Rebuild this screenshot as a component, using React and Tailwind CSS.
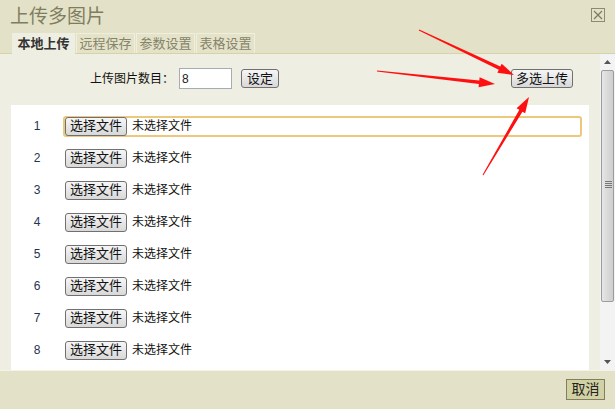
import React from 'react';

const tabs = ['本地上传', '远程保存', '参数设置', '表格设置'];
const rows = [1, 2, 3, 4, 5, 6, 7, 8];

// red arrow made of a tapered shaft and a filled head
const Arrow = ({ x1, y1, x2, y2 }) => {
  const dx = x2 - x1;
  const dy = y2 - y1;
  const len = Math.hypot(dx, dy);
  const ux = dx / len;
  const uy = dy / len;
  const nx = -uy;
  const ny = ux;
  const head = 16;
  const bx = x2 - ux * head;
  const by = y2 - uy * head;
  const pts = [
    [x1 + nx * 0.5, y1 + ny * 0.5],
    [bx + nx * 1.8, by + ny * 1.8],
    [bx + nx * 5, by + ny * 5],
    [x2, y2],
    [bx - nx * 5, by - ny * 5],
    [bx - nx * 1.8, by - ny * 1.8],
    [x1 - nx * 0.5, y1 - ny * 0.5],
  ];
  return <polygon points={pts.map((p) => p.join(',')).join(' ')} fill="#ff1010" />;
};

const GrayButton = ({ children, className = '' }) => (
  <button
    className={`flex h-[19px] items-center justify-center whitespace-nowrap rounded-[3px] border border-[#707070] bg-gradient-to-b from-[#f6f6f6] to-[#d8d8d8] p-0 text-[13px] leading-[16px] text-[#111] ${className}`}
  >
    {children}
  </button>
);

export default function App() {
  return (
    <div
      className="relative flex h-[409px] w-[615px] flex-col overflow-hidden bg-[#e3e2c8] text-[#222]"
      style={{ fontFamily: '"Liberation Sans", "Noto Sans CJK SC", sans-serif' }}
    >
      {/* header */}
      <div className="relative h-[54px] shrink-0 border-b border-[#d6d4a6]">
        <div className="pl-[10px] pt-[4px] text-[19px] leading-[26px] text-[#7f7d60]">上传多图片</div>
        <div className="absolute right-[10px] top-[8px] flex h-[14px] w-[14px] items-center justify-center border border-[#8c8b70]">
          <svg width="10" height="10" viewBox="0 0 10 10">
            <path d="M1 1L9 9M9 1L1 9" stroke="#7c7b60" strokeWidth="1.2" />
          </svg>
        </div>
        <div className="absolute bottom-[-1px] left-[12px] flex gap-[1px]">
          {tabs.map((t, i) => (
            <div
              key={t}
              className={
                i === 0
                  ? 'flex h-[21px] w-[63px] items-center justify-center bg-[#efeee2] text-[13px] font-bold text-[#333]'
                  : 'flex h-[20px] w-[59px] items-center justify-center border border-b-0 border-[#f0efdc] bg-[#e4e3c9] text-[13px] text-[#86846a]'
              }
            >
              {t}
            </div>
          ))}
        </div>
      </div>

      {/* body */}
      <div className="flex min-h-0 flex-1 bg-[#efeee2]">
        <div className="flex flex-1 flex-col pl-[11px] pr-[11px]">
          <div className="flex h-[51px] items-center pb-[2px]">
            <span className="ml-[79px] text-[12px] text-[#111]">上传图片数目：</span>
            <div className="ml-[5px] flex h-[21px] w-[53px] items-center border border-[#a5acb2] bg-white pl-[2px] text-[12px]">8</div>
            <GrayButton className="ml-[9px] w-[38px]">设定</GrayButton>
            <GrayButton className="ml-auto mr-[16px] w-[62px]">多选上传</GrayButton>
          </div>
          <div className="flex-1 bg-white pt-[5px]">
            {rows.map((n) => (
              <div key={n} className="flex h-[32px] items-center">
                <span className="w-[52px] text-center text-[12px] text-[#1f3452]">{n}</span>
                <div
                  className={`flex h-[21px] w-[519px] items-center rounded-[3px] border-2 text-[12px] ${
                    n === 1 ? 'border-[#ecc87c]' : 'border-transparent'
                  }`}
                >
                  <GrayButton className="h-[18px] w-[62px] text-[12px]">选择文件</GrayButton>
                  <span className="ml-[5px] whitespace-nowrap text-[12px] text-[#111]">未选择文件</span>
                </div>
              </div>
            ))}
          </div>
        </div>

        {/* scrollbar */}
        <div className="flex w-[15px] shrink-0 flex-col bg-[#f3f3f3]">
          <div className="flex h-[16px] items-center justify-center">
            <svg width="7" height="4" viewBox="0 0 7 4"><path d="M0 4L3.5 0L7 4Z" fill="#555" /></svg>
          </div>
          <div className="relative mx-[1px] h-[232px] rounded-[2px] border border-[#9c9c9c] bg-gradient-to-r from-[#e6e6e6] via-[#dadada] to-[#cfcfcf]">
            <div className="absolute left-[3px] top-[110px] flex w-[7px] flex-col gap-[1px]">
              <div className="h-px bg-[#777]" />
              <div className="h-px bg-[#777]" />
              <div className="h-px bg-[#777]" />
              <div className="h-px bg-[#777]" />
            </div>
          </div>
          <div className="flex-1" />
          <div className="flex h-[16px] items-center justify-center">
            <svg width="7" height="4" viewBox="0 0 7 4"><path d="M0 0L3.5 4L7 0Z" fill="#555" /></svg>
          </div>
        </div>
      </div>

      {/* footer */}
      <div className="flex h-[39px] shrink-0 items-start justify-end border-t border-[#f3f2e4] pr-[10px] pt-[8px]">
        <button className="h-[21px] w-[39px] border border-[#807f5f] bg-[#d2d1a3] text-[14px] leading-[19px] text-[#222]">取消</button>
      </div>

      {/* annotation arrows */}
      <svg className="pointer-events-none absolute left-0 top-0" width="615" height="409">
        <Arrow x1={419} y1={30} x2={514} y2={75} />
        <Arrow x1={377} y1={71} x2={495} y2={84} />
        <Arrow x1={483} y1={175} x2={529} y2={97} />
      </svg>
    </div>
  );
}
